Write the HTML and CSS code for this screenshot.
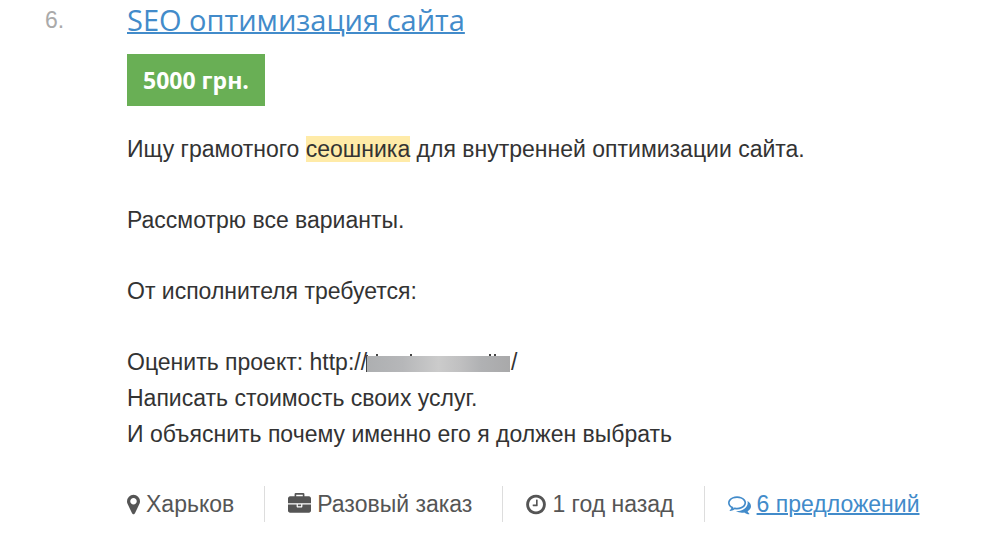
FILE: index.html
```html
<!DOCTYPE html>
<html lang="ru">
<head>
  <meta charset="UTF-8">
  <meta name="viewport" content="width=device-width, initial-scale=1.0">
  <title>SEO оптимизация сайта</title>
  <link rel="stylesheet" href="styles.css">
</head>
<body>

  <article class="project">
    <div class="number">6.</div>
    <div class="content">
      <h2><a href="#">SEO оптимизация сайта</a></h2>
      <div class="price">5000 грн.</div>

      <div class="description">
        <p>Ищу грамотного <mark>сеошника</mark> для внутренней оптимизации сайта.</p>
        <p>Рассмотрю все варианты.</p>
        <p>От исполнителя требуется:</p>
        <p>
          Оценить проект: http://<svg class="hidden-url" viewBox="0 0 146 20" aria-hidden="true">
            <defs>
              <linearGradient id="smudge">
                <stop offset="0" stop-color="#adafb1"/>
                <stop offset="0.25" stop-color="#b6b7b9"/>
                <stop offset="0.5" stop-color="#cbcbcb"/>
                <stop offset="0.65" stop-color="#c0c0c1"/>
                <stop offset="0.8" stop-color="#b0b1b3"/>
                <stop offset="1" stop-color="#a9a9aa"/>
              </linearGradient>
            </defs>
            <path fill="#444" d="M1 1h2v17h-2zM11 0h2v2h-2zM45 0h2v2h-2zM124 0h2v2h-2zM129 0h2v2h-2z"/>
            <path fill="url(#smudge)" d="M2 2h143v16H2z"/>
          </svg>/<br>
          Написать стоимость своих услуг.<br>
          И объяснить почему именно его я должен выбрать
        </p>
      </div>

      <ul class="meta">
        <li>
          <svg class="icon marker" viewBox="0 0 1024 1792" aria-hidden="true"><path d="M768 640q0-106-75-181t-181-75-181 75-75 181 75 181 181 75 181-75 75-181zm256 0q0 109-33 179l-364 774q-16 33-47.5 52t-67.5 19-67.5-19-46.5-52l-365-774q-33-70-33-179 0-212 150-362t362-150 362 150 150 362z"/></svg>
          Харьков
        </li>
        <li>
          <svg class="icon" viewBox="0 0 1792 1792" aria-hidden="true"><path d="M640 256h512v-128h-512v128zm1152 640v480q0 66-47 113t-113 47h-1472q-66 0-113-47t-47-113v-480h672v160q0 26 19 45t45 19h320q26 0 45-19t19-45v-160h672zm-768 0v128h-256v-128h256zm768-480v384h-1792v-384q0-66 47-113t113-47h352v-160q0-40 28-68t68-28h576q40 0 68 28t28 68v160h352q66 0 113 47t47 113z"/></svg>
          Разовый заказ
        </li>
        <li>
          <svg class="icon clock" viewBox="128 0 1536 1792" aria-hidden="true"><path d="M1024 544v448q0 14-9 23t-23 9h-320q-14 0-23-9t-9-23v-64q0-14 9-23t23-9h224v-352q0-14 9-23t23-9h64q14 0 23 9t9 23zm416 352q0-148-73-273t-198-198-273-73-273 73-198 198-73 273 73 273 198 198 273 73 273-73 198-198 73-273zm224 0q0 209-103 385.5t-279.5 279.5-385.5 103-385.5-103-279.5-279.5-103-385.5 103-385.5 279.5-279.5 385.5-103 385.5 103 279.5 279.5 103 385.5z"/></svg>
          1 год назад
        </li>
        <li>
          <svg class="icon comments" viewBox="0 0 1792 1792" aria-hidden="true"><path d="M704 384q-153 0-286 52t-211.5 141-78.5 191q0 82 53 158t149 132l97 56-35 84q34-20 62-39l44-31 53 10q78 14 153 14 153 0 286-52t211.5-141 78.5-191-78.5-191-211.5-141-286-52zm0-128q191 0 353.5 68.5t256.5 186.5 94 257-94 257-256.5 186.5-353.5 68.5q-86 0-176-16-124 88-278 128-36 9-86 16h-3q-11 0-20.5-8t-11.5-21q-1-3-1-6.5t.5-6.5 2-6l2.5-5 3.5-5.5 4-5 4.5-5 4-4.5q5-6 23-25t26-29.5 22.5-29 25-38.5 20.5-44q-124-72-195-177t-71-224q0-139 94-257t256.5-186.5 353.5-68.5zm822 1169q10 24 20.5 44t25 38.5 22.5 29 26 29.5 23 25q1 1 4 4.5t4.5 5 4 5 3.5 5.5l2.5 5 2 6 .5 6.5-1 6.5q-3 14-13 22t-22 7q-50-7-86-16-154-40-278-128-90 16-176 16-271 0-472-132 58 4 88 4 161 0 309-45t264-129q125-92 192-212t67-254q0-77-23-152 129 71 204 178t75 230q0 120-71 224.5t-195 176.5z"/></svg>
          <a href="#">6 предложений</a>
        </li>
      </ul>
    </div>
  </article>

</body>
</html>
```
FILE: styles.css
```css
* {
  box-sizing: border-box;
  margin: 0;
  padding: 0;
}
body {
  font-family: "Liberation Sans", Arial, sans-serif;
  font-size: 23px;
  line-height: 36px;
  background: #fff;
  color: #333;
}
a {
  color: #428bca;
  text-decoration: underline;
  text-decoration-thickness: 2px;
}
.project {
  display: flex;
  padding: 0 45px;
}
.number {
  width: 82px;
  flex-shrink: 0;
  line-height: 40px;
  color: #aaa;
}
.content {
  flex: 1;
}
h2 {
  font-family: "Open Sans", sans-serif;
  font-size: 29px;
  font-weight: 400;
  line-height: 40px;
  margin-bottom: 14px;
}
.price {
  display: inline-block;
  padding: 8px 16px;
  font-family: "Open Sans", sans-serif;
  font-weight: 700;
  background: #69af55;
  color: #fff;
}
.description {
  margin: 25px 0 34px;
}
.description p + p {
  margin-top: 35px;
}
mark {
  background: #ffeba8;
  color: inherit;
}
.hidden-url {
  width: 146px;
  height: 20px;
  margin-left: -2px;
  vertical-align: -4px;
}
.meta {
  display: flex;
  flex-wrap: wrap;
  list-style: none;
  color: #555;
}
.meta li {
  display: flex;
  align-items: center;
  gap: 6px;
  padding-right: 30px;
  margin-right: 23px;
  border-right: 1px solid #ddd;
}
.meta li:last-child {
  padding-right: 0;
  margin-right: 0;
  border-right: none;
}
.icon {
  width: 23px;
  height: 23px;
  fill: #555;
}
.marker {
  width: 13px;
}
.clock {
  width: 20px;
}
.comments {
  fill: #428bca;
}
```
